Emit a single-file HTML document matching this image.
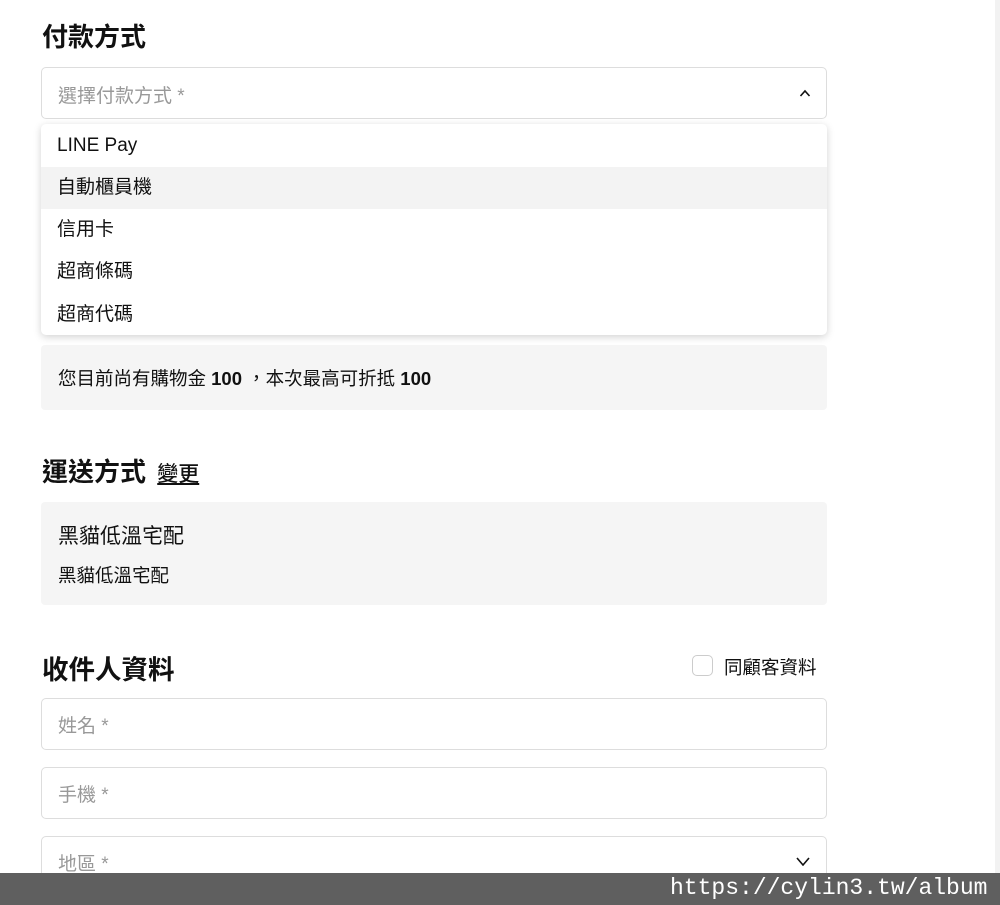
<!DOCTYPE html>
<html><head><meta charset="utf-8"><style>
*{box-sizing:border-box;margin:0;padding:0}
body{width:1000px;height:905px;background:#fff;font-family:"Liberation Sans","Noto Sans CJK TC",sans-serif;color:#111;position:relative;overflow:hidden}
.a{position:absolute}
h2{position:absolute;font-size:26px;font-weight:700;left:42px}
.box{position:absolute;left:41px;width:786px;border:1.5px solid #ddd;border-radius:5px;background:#fff}
.ph{position:absolute;left:16px;font-size:19px;color:#999}
.gray{position:absolute;left:41px;width:786px;background:#f5f5f5;border-radius:4px}
.it{position:absolute;left:0;width:786px;height:42px;font-size:19px;padding-left:16px;line-height:42px}
</style></head><body>
<h2 style="top:17px">付款方式</h2>
<div class="box" style="top:67px;height:52px"><span class="ph" style="top:13px">選擇付款方式 *</span>
<svg class="a" style="left:757px;top:21px" width="12" height="8" viewBox="0 0 12 8"><path d="M1.5 7 L6 2 L10.5 7" fill="none" stroke="#111" stroke-width="1.6"/></svg></div>
<div class="gray" style="top:345px;height:65px"><span class="a" style="left:17px;top:20px;font-size:18.5px">您目前尚有購物金 <b>100</b> ，本次最高可折抵 <b>100</b></span></div>
<div class="a" style="left:41px;top:124px;width:786px;height:211px;background:#fff;border-radius:5px;box-shadow:0 2px 8px rgba(0,0,0,.18)">
<div class="it" style="top:1px">LINE Pay</div>
<div class="it" style="top:43px;background:#f3f3f3">自動櫃員機</div>
<div class="it" style="top:85px">信用卡</div>
<div class="it" style="top:127px">超商條碼</div>
<div class="it" style="top:170px">超商代碼</div>
</div>
<h2 style="top:452px">運送方式 <span style="font-size:21px;font-weight:500;text-decoration:underline;margin-left:4px">變更</span></h2>
<div class="gray" style="top:502px;height:103px"><span class="a" style="left:17px;top:18px;font-size:21px">黑貓低溫宅配</span><span class="a" style="left:17px;top:60px;font-size:18.5px">黑貓低溫宅配</span></div>
<h2 style="top:648px;font-size:26.5px">收件人資料</h2>
<div class="a" style="left:692px;top:655px;width:21px;height:21px;border:1.5px solid #ccc;border-radius:5px"></div>
<span class="a" style="left:724px;top:654px;font-size:18.5px">同顧客資料</span>
<div class="box" style="top:698px;height:52px"><span class="ph" style="top:12px">姓名 *</span></div>
<div class="box" style="top:767px;height:52px"><span class="ph" style="top:12px">手機 *</span></div>
<div class="box" style="top:836px;height:52px"><span class="ph" style="top:12px">地區 *</span>
<svg class="a" style="left:754px;top:20px" width="14" height="9" viewBox="0 0 14 9"><path d="M1 1 L7 8 L13 1" fill="none" stroke="#111" stroke-width="1.6"/></svg></div>
<div class="a" style="left:995px;top:0;width:5px;height:873px;background:#f2f2f2"></div>
<div class="a" style="left:0;top:873px;width:1000px;height:32px;background:#5f5f5f"></div>
<span class="a" style="left:670px;top:875px;font-family:'Liberation Mono',monospace;font-size:23px;color:#fff">https://cylin3.tw/album</span>
</body></html>
